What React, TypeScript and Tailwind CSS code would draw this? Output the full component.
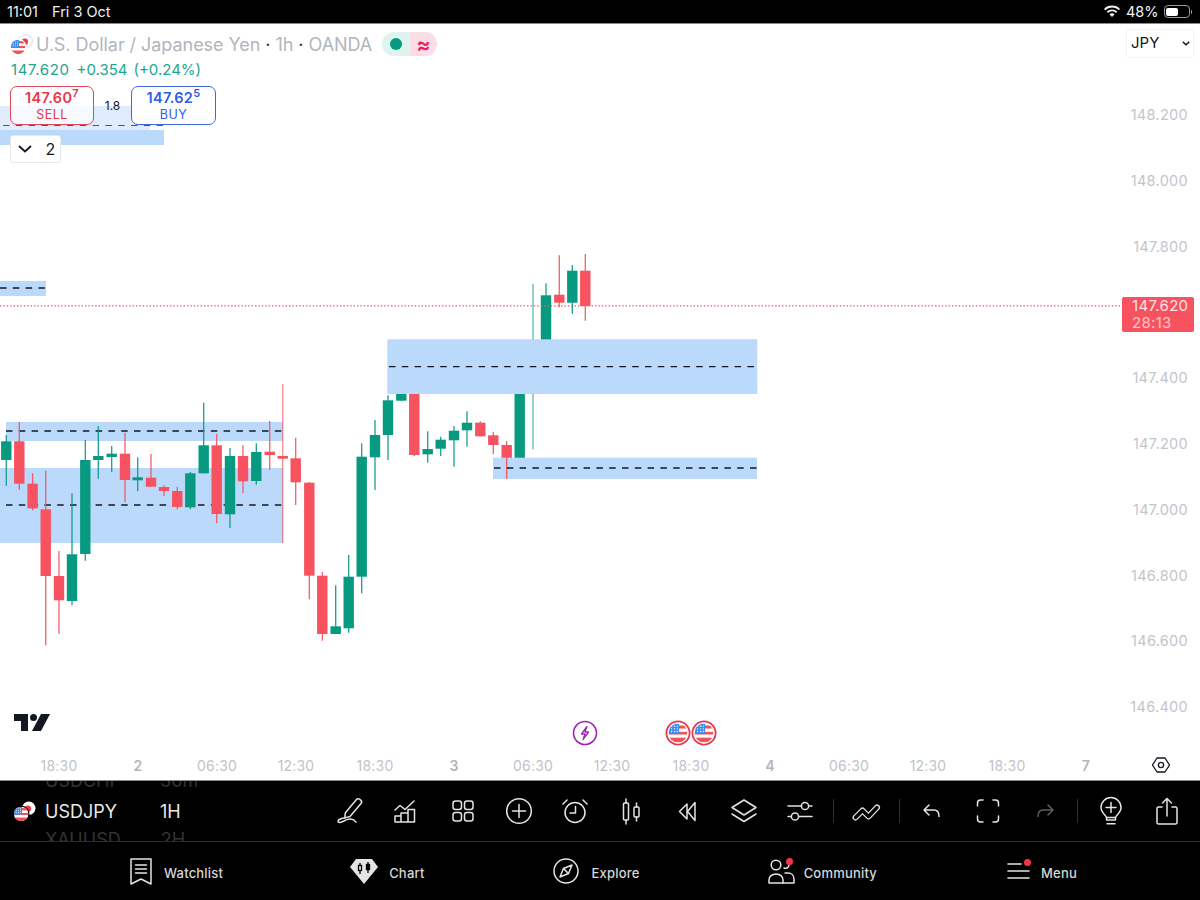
import type { ReactNode } from "react"

const GREEN = "#089981"
const RED = "#f7525f"

// color, x, wick top, body top, body bottom, wick bottom (page coords)
type Candle = [string, number, number, number, number, number, boolean?]

const candles: Candle[] = [
  ["g", 6.3, 435, 441.3, 460, 485.7],
  ["r", 19.3, 422, 441.3, 483.7, 489.7],
  ["r", 32.6, 473.3, 483.7, 508.3, 510.3],
  ["r", 45.7, 470.7, 509.3, 576, 645.3],
  ["r", 59, 551, 576, 600.3, 634],
  ["g", 72, 493.3, 554.3, 601, 605.3],
  ["g", 85.3, 440, 460, 554, 560.7],
  ["g", 98.3, 426, 456, 460, 478.7],
  ["g", 111.7, 446, 453.7, 457, 472],
  ["r", 125, 432.7, 453.7, 480, 502],
  ["g", 137.7, 457.3, 477.3, 480.3, 491.3],
  ["r", 151, 454, 477.7, 486.7, 486.7],
  ["r", 164, 485.3, 487, 491, 496],
  ["r", 177.3, 486.7, 491, 507, 509.3],
  ["g", 190.3, 472, 473.3, 507.3, 509.3],
  ["g", 203.7, 402.7, 445.3, 473.3, 473.3],
  ["r", 216.7, 434, 445.3, 514, 523.3],
  ["g", 230, 448, 456, 514.3, 528],
  ["r", 243, 445.3, 456, 481.3, 493.3],
  ["g", 256.3, 443.3, 452, 481, 484.7],
  ["r", 269.7, 421, 451.7, 455, 469.7],
  ["r", 282.7, 384, 456, 458.7, 543.3, true],
  ["r", 295.7, 437.7, 458.3, 482.3, 505],
  ["r", 309.3, 482, 482.7, 575.7, 599.3],
  ["r", 322.3, 572, 575.7, 634, 640.7],
  ["g", 335.7, 585.3, 626.3, 634, 634],
  ["g", 348.7, 555, 576.7, 628.3, 632.7],
  ["g", 361.7, 443.3, 456.7, 576.7, 593.3],
  ["g", 375, 420, 435, 457.3, 490],
  ["g", 388, 395.3, 400.3, 435, 460],
  ["g", 401.3, 390, 390, 400.7, 400.7],
  ["r", 414.3, 390, 390, 455, 456],
  ["g", 427.7, 431.3, 449, 454.3, 462.7],
  ["g", 440.7, 436.7, 439.7, 448.7, 456],
  ["g", 454, 426, 430.7, 440.3, 466.7],
  ["g", 467, 411.3, 422.7, 430.3, 446.7],
  ["r", 480.3, 421.3, 422.7, 436.3, 436.3],
  ["r", 493.3, 432, 435.3, 445, 454.3],
  ["r", 506.7, 441, 445, 458.3, 478.7],
  ["g", 519.7, 380, 380, 458.3, 458.3],
  ["g", 533, 284, 345, 345, 449.3, true],
  ["g", 546, 283.3, 295.3, 345, 345],
  ["r", 559.3, 255.3, 294.7, 302.7, 307.3],
  ["g", 572.3, 265, 270.7, 302.7, 313.7],
  ["r", 585.3, 254, 270.7, 306, 320.7],
]

function Candles() {
  return (
    <g>
      {candles.map(([c, x, wt, bt, bb, wb, pale], i) => {
        const color = c === "g" ? GREEN : RED
        return (
          <g key={i}>
            <line x1={x} x2={x} y1={wt} y2={wb} stroke={color} strokeWidth={pale ? 1.2 : 1.3} opacity={pale ? 0.72 : 0.92} />
            <rect x={x - 5.2} y={bt} width={10.4} height={bb - bt} fill={color} />
          </g>
        )
      })}
    </g>
  )
}

function Zone({ x, y, w, h, dash, dashX }: { x: number; y: number; w: number; h: number; dash: number; dashX?: number }) {
  return (
    <g>
      <rect x={x} y={y} width={w} height={h} fill="#bbd9fb" />
      <line x1={dashX ?? x} x2={x + w} y1={dash} y2={dash} stroke="#131722" strokeWidth={1.3} strokeDasharray="6.5 6.3" />
    </g>
  )
}

function UsFlag({ id, cx, cy, r }: { id: string; cx: number; cy: number; r: number }) {
  const top = cy - r
  const left = cx - r
  const d = r * 2
  return (
    <g>
      <clipPath id={id}>
        <circle cx={cx} cy={cy} r={r} />
      </clipPath>
      <g clipPath={"url(#" + id + ")"}>
        <rect x={left} y={top} width={d} height={d} fill="#fff" />
        <rect x={left} y={top + d * 0.1} width={d} height={d * 0.16} fill="#ef5350" />
        <rect x={left} y={top + d * 0.44} width={d} height={d * 0.14} fill="#ef5350" />
        <rect x={left} y={top + d * 0.75} width={d} height={d * 0.25} fill="#ef5350" />
        <rect x={left} y={top} width={d * 0.56} height={d * 0.56} fill="#3f8cf0" />
        {[0.16, 0.32, 0.46].map((a) =>
          [0.14, 0.28, 0.42].map((b) => (
            <circle key={a + "-" + b} cx={left + d * a} cy={top + d * b} r={d * 0.035} fill="#fff" />
          )),
        )}
      </g>
    </g>
  )
}

function PairFlag({ id, dark, className }: { id: string; dark?: boolean; className: string }) {
  return (
    <svg viewBox="0 0 24 22" className={className}>
      <circle cx="16.5" cy="7.5" r="7" fill="#fff" stroke={dark ? "#000" : "#d1d4dc"} strokeWidth={dark ? 0 : 0.8} />
      <circle cx="15.5" cy="8" r="3.4" fill="#ef3b4a" />
      <circle cx="8.5" cy="13.5" r="8.6" fill={dark ? "#000" : "#fff"} />
      <UsFlag id={id} cx={8.5} cy={13.5} r={7.6} />
    </svg>
  )
}

function EventFlag({ id }: { id: string }) {
  return (
    <svg viewBox="0 0 26 26" className="h-[26px] w-[26px]">
      <circle cx="13" cy="13" r="11.6" fill="#fff" stroke="#e53950" strokeWidth="1.8" />
      <UsFlag id={id} cx={13} cy={13} r={9.4} />
    </svg>
  )
}

function Tool({ children }: { children: ReactNode }) {
  return (
    <div className="flex w-[56.25px] shrink-0 items-center justify-center">
      <svg viewBox="0 0 30 30" width="30" height="30" fill="none" stroke="#e4e4e4" strokeWidth="1.5" strokeLinecap="round" strokeLinejoin="round">
        {children}
      </svg>
    </div>
  )
}

function Sep() {
  return (
    <div className="flex w-[9.75px] shrink-0 justify-center">
      <div className="h-[24px] w-px bg-[#2e2e2e]" />
    </div>
  )
}

function Toolbar() {
  return (
    <div className="flex items-center">
      <Tool>
        <path d="M21.5 3.5a2.2 2.2 0 0 1 3.2-.2l1.2 1.1a2.2 2.2 0 0 1 .1 3.1L15 20.5l-5.2 1.4.6-5.2z" />
        <path d="M9.8 22c-3 .2-6.8 1.5-6.8 3.3 0 1.7 2.5 1.5 4.5.4 2.6-1.5 5-3 8-2.6 2.5.3 4.3 1.5 5.5 3" />
      </Tool>
      <Tool>
        <path d="M4 14l5-4.5 5 4 9-8.5" />
        <path d="M4 26v-6h6v6zM10 26v-9h7v9zM17 26V13.5h6.5V26zM4 26h19.5" />
      </Tool>
      <Tool>
        <rect x="5" y="5" width="8.5" height="8.5" rx="2.5" />
        <rect x="16.5" y="5" width="8.5" height="8.5" rx="2.5" />
        <rect x="5" y="16.5" width="8.5" height="8.5" rx="2.5" />
        <rect x="16.5" y="16.5" width="8.5" height="8.5" rx="2.5" />
      </Tool>
      <Tool>
        <circle cx="15" cy="15" r="12.3" />
        <path d="M15 8.5v13M8.5 15h13" />
      </Tool>
      <Tool>
        <circle cx="15" cy="16.5" r="10" />
        <path d="M15.5 10.5v6.5H10M3 8l4-4M27 8l-4-4" />
      </Tool>
      <Tool>
        <path d="M10 3v4M10 24v4M20.5 7v4M20.5 21v4" />
        <rect x="7.5" y="7" width="5" height="17" rx="1" />
        <rect x="18" y="11" width="5" height="10" rx="1" />
      </Tool>
      <Tool>
        <path d="M14 8l-7.5 7.5L14 23zM22 6.5l-7.5 9 7.5 9z" />
      </Tool>
      <Tool>
        <path d="M15 4l12 7.5L15 19 3 11.5z" />
        <path d="M3 18l12 7.5L27 18" />
      </Tool>
      <Tool>
        <path d="M3 10h13.5M24 10h3M3 20.5h3M13.5 20.5H27" />
        <circle cx="20" cy="10" r="3.6" />
        <circle cx="10" cy="20.5" r="3.6" />
      </Tool>
      <Sep />
      <Tool>
        <path d="M4.5 21.5l7-7 6 6 8.5-9" strokeWidth="6" />
        <path d="M4.5 21.5l7-7 6 6 8.5-9" stroke="#000" strokeWidth="3.4" />
      </Tool>
      <Sep />
      <Tool>
        <path d="M12 9l-5 5 5 5M7 14h10c3.5 0 5 2.5 5 6.5" />
      </Tool>
      <Tool>
        <path d="M10 4H7.5A3 3 0 0 0 4.5 7v3M20 4h2.5a3 3 0 0 1 3 3v3M4.5 20v3a3 3 0 0 0 3 3H10M25.5 20v3a3 3 0 0 1-3 3H20" />
      </Tool>
      <Tool>
        <g stroke="#5f5f5f">
          <path d="M18 9l5 5-5 5M23 14H13c-3.5 0-5 2.5-5 6.5" />
        </g>
      </Tool>
      <Sep />
      <Tool>
        <path d="M10.5 24v-2.5c0-2-5.5-4.5-5.5-10a10 10 0 0 1 20 0c0 5.5-5.5 8-5.5 10V24zM11 27.8h8" />
        <path d="M15 6.5v10M10 11.5h10M10.5 21.5h9" />
      </Tool>
      <Tool>
        <path d="M10 11H6.5A1.5 1.5 0 0 0 5 12.5v14A1.5 1.5 0 0 0 6.5 28h17a1.5 1.5 0 0 0 1.5-1.5v-14a1.5 1.5 0 0 0-1.5-1.5H20" />
        <path d="M15 20V2.5M10.5 7L15 2.5 19.5 7" />
      </Tool>
    </div>
  )
}

function NavItem({ icon, label, className }: { icon: ReactNode; label: string; className: string }) {
  return (
    <div className={"relative flex items-center " + className}>
      {icon}
      <span className="mt-[5px] text-[13px] font-medium tracking-[0.2px] text-[#d6d6d6]">{label}</span>
    </div>
  )
}

function Nav() {
  const stroke = { fill: "none", stroke: "#e4e4e4", strokeWidth: 1.5, strokeLinejoin: "round" as const, strokeLinecap: "round" as const }
  return (
    <div className="flex h-[58px] items-center pl-[130px]">
      <NavItem
        className="gap-[12px]"
        label="Watchlist"
        icon={
          <svg viewBox="0 0 22 27" width="22" height="27" {...stroke}>
            <path d="M1 1h20v25l-10-5-10 5z" />
            <path d="M5.5 7h11M5.5 11h11M5.5 15h11" />
          </svg>
        }
      />
      <NavItem
        className="ml-[127px] gap-[11px]"
        label="Chart"
        icon={
          <svg viewBox="0 0 28 26" width="28" height="26">
            <path d="M6 1h16l6 8-14 17L0 9z" fill="#e4e4e4" />
            <g stroke="#000" strokeWidth="1.3" fill="none">
              <path d="M10 5v11M18 4v11" />
              <rect x="8.5" y="7.5" width="3" height="5" fill="#e4e4e4" />
              <rect x="16.5" y="6.5" width="3" height="5" fill="#000" />
            </g>
          </svg>
        }
      />
      <NavItem
        className="ml-[128px] gap-[13px]"
        label="Explore"
        icon={
          <svg viewBox="0 0 26 26" width="26" height="26" {...stroke}>
            <circle cx="13" cy="13" r="12" />
            <path d="M19 7l-3.5 8.5L7 19l3.5-8.5z" />
            <path d="M10.5 10.5l5 5" />
          </svg>
        }
      />
      <NavItem
        className="ml-[128px] gap-[9px]"
        label="Community"
        icon={
          <>
            <svg viewBox="0 0 27 25" width="27" height="25" {...stroke}>
              <circle cx="8" cy="6" r="4.8" />
              <path d="M1 24v-3c0-3.5 3-6 7-6s7 2.5 7 6v3z" />
              <path d="M21 3v3a3.5 3.5 0 0 1-5 3M17 14h3c3.5 0 6 2.5 6 6v4H15" />
            </svg>
            <span className="absolute top-[-1px] left-[18px] h-[7px] w-[7px] rounded-full bg-[#f23645]" />
          </>
        }
      />
      <NavItem
        className="ml-[130px] gap-[11px]"
        label="Menu"
        icon={
          <>
            <svg viewBox="0 0 23 20" width="23" height="20" fill="none" stroke="#e4e4e4" strokeWidth="1.6" strokeLinecap="round">
              <path d="M1 3h13M1 10h21M1 17h21" />
            </svg>
            <span className="absolute top-0 left-[17px] h-[7px] w-[7px] rounded-full bg-[#f23645]" />
          </>
        }
      />
    </div>
  )
}

// the 147.600 slot sits under the live price tag, so it stays empty
const prices = ["148.200", "148.000", "147.800", "", "147.400", "147.200", "147.000", "146.800", "146.600", "146.400"]
const times = ["18:30", "2", "06:30", "12:30", "18:30", "3", "06:30", "12:30", "18:30", "4", "06:30", "12:30", "18:30", "7"]

export default function App() {
  return (
    <div className="flex h-[900px] w-[1200px] flex-col overflow-hidden bg-white font-['Inter','Liberation_Sans',sans-serif]">
      {/* status bar */}
      <div className="flex h-[24px] items-center justify-between border-b border-[#8a8a8a] bg-black pr-[8px] pl-[7px] text-[14.5px] text-[#f2f2f2]">
        <div className="flex gap-[14px]">
          <span>11:01</span>
          <span>Fri 3 Oct</span>
        </div>
        <div className="flex items-center gap-[5px]">
          <svg viewBox="0 0 18 13" width="18" height="13" fill="#f2f2f2">
            <path d="M9 2.5c2.6 0 5 1 6.8 2.7l1.2-1.3A11.6 11.6 0 0 0 9 .6 11.6 11.6 0 0 0 1 3.9l1.2 1.3A9.8 9.8 0 0 1 9 2.5z" />
            <path d="M9 6.3c1.6 0 3 .6 4.1 1.6l1.2-1.3A7.8 7.8 0 0 0 9 4.5a7.8 7.8 0 0 0-5.3 2.1l1.2 1.3A6 6 0 0 1 9 6.3z" />
            <path d="M9 8.2c-1 0-1.9.4-2.6 1L9 12l2.6-2.8A3.8 3.8 0 0 0 9 8.2z" />
          </svg>
          <span>48%</span>
          <div className="flex items-center gap-[1px]">
            <div className="h-[13px] w-[26px] rounded-[4px] border border-[#9a9a9a] p-[1.5px]">
              <div className="h-full w-[12px] rounded-[2px] bg-white" />
            </div>
            <div className="h-[4px] w-[1.5px] rounded-r bg-[#9a9a9a]" />
          </div>
        </div>
      </div>

      {/* chart */}
      <div className="relative flex-1">
        <svg viewBox="0 24 1200 728" className="absolute inset-0 h-full w-full">
          <rect x="0" y="106" width="150" height="24" fill="#e0ecfc" />
          <rect x="0" y="130" width="164" height="15" fill="#bbd9fb" />
          <line x1="3" x2="164" y1="125.5" y2="125.5" stroke="#131722" strokeWidth="1" strokeDasharray="6.5 6.3" opacity="0.7" />
          <Zone x={0} y={281} w={46} h={15} dash={288} />
          <Zone x={6} y={422} w={277} h={19} dash={431} />
          <Zone x={0} y={468} w={283} h={75} dash={505} dashX={6} />
          <Candles />
          <Zone x={387.3} y={339.3} w={370} h={54.7} dash={366.7} dashX={389} />
          <rect x="493" y="457.7" width="264" height="21.3" fill="#bbd9fb" />
          <line x1={506.7} x2={506.7} y1={458} y2={478.7} stroke={RED} strokeWidth="1.3" />
          <line x1="494" x2="757" y1="468" y2="468" stroke="#131722" strokeWidth="1.3" strokeDasharray="6.5 6.3" />
          <line x1="0" x2="1122" y1="305.8" y2="305.8" stroke={RED} strokeWidth="1.2" strokeDasharray="1.4 2" />
        </svg>

        {/* legend */}
        <div className="absolute top-0 left-0 pt-[8px] pl-[10px]">
          <div className="flex h-[24px] items-center">
            <PairFlag id="legend-us" className="mr-[3px] h-[21px] w-[23px]" />
            <span className="text-[18px] tracking-[-0.05px] text-[#b2b5be]">
              U.S. Dollar / Japanese Yen<span className="text-[#131722]"> · </span>1h<span className="text-[#131722]"> · </span>OANDA
            </span>
            <div className="ml-[10px] flex h-[24px] w-[55px]">
              <div className="flex flex-1 items-center justify-center rounded-l-full bg-[#dff3ef]">
                <span className="h-[12px] w-[12px] rounded-full bg-[#089981]" />
              </div>
              <div className="flex flex-1 items-center justify-center rounded-r-full bg-[#fbdde6] text-[21px] leading-none font-semibold text-[#e91e63]">≈</div>
            </div>
          </div>
          <div className="mt-[5px] flex pl-[1px] text-[15px] leading-[18px] text-[#22a68f]">
            <span className="tracking-[0.6px]">147.620</span>
            <span className="ml-[7px]">+0.354</span>
            <span className="ml-[6px]">(+0.24%)</span>
          </div>
          <div className="mt-[7px] flex items-center">
            <div className="flex h-[39px] w-[84px] flex-col items-center justify-center rounded-[7px] border border-[#e04757] bg-white/70 text-[#e8374a]">
              <span className="text-[14.5px] leading-[18px] font-semibold tracking-[0.3px]">
                147.60<sup className="text-[11px]">7</sup>
              </span>
              <span className="text-[12.5px] leading-[16px] tracking-[0.5px]">SELL</span>
            </div>
            <span className="w-[37px] text-center text-[12px] text-[#131722]">1.8</span>
            <div className="flex h-[39px] w-[85px] flex-col items-center justify-center rounded-[7px] border border-[#3f66e8] bg-white text-[#2f5ce8]">
              <span className="text-[14.5px] leading-[18px] font-semibold tracking-[0.3px]">
                147.62<sup className="text-[11px]">5</sup>
              </span>
              <span className="text-[12.5px] leading-[16px] tracking-[0.5px]">BUY</span>
            </div>
          </div>
          <div className="mt-[10px] flex h-[28px] w-[51px] items-center justify-center gap-[14px] rounded-[3px] border border-[#e6e8ee] bg-white pl-[2px] text-[16px] text-[#131722]">
            <svg viewBox="0 0 14 8" width="14" height="8" fill="none" stroke="#131722" strokeWidth="1.8">
              <path d="M1 1l6 5.5L13 1" />
            </svg>
            2
          </div>
        </div>

        {/* price axis */}
        <div className="absolute top-0 right-0 flex flex-col items-end pr-[12px]">
          <div className="mt-[5px] mr-[-6px] mb-[24px] flex h-[29px] w-[68px] items-center justify-between rounded-[4px] border border-[#f0f3fa] pr-[3px] pl-[4px] text-[15px] text-[#131722]">
            JPY
            <svg viewBox="0 0 10 6" width="8" height="5" fill="none" stroke="#131722" strokeWidth="1.8">
              <path d="M1 1l4 3.5L9 1" />
            </svg>
          </div>
          {prices.map((p, i) => (
            <div key={i} className="flex h-[65.8px] items-center text-[14.5px] tracking-[0.3px] text-[#c3c5cb]">
              {p}
            </div>
          ))}
        </div>

        <div className="absolute top-[273px] right-[6px] flex h-[35px] w-[72px] flex-col justify-center rounded-[2px] bg-[#f7525f] pl-[10px] text-[15px] leading-[16.5px] tracking-[0.3px] text-[#fde3e5]">
          <span>147.620</span>
          <span className="text-[#fdc5c9]">28:13</span>
        </div>

        {/* logo and events */}
        <svg viewBox="0 0 36 17" width="36" height="17" className="absolute top-[690px] left-[14px]" fill="#131722">
          <path d="M0 0h14v17H7V7H0z" />
          <circle cx="19.5" cy="3.5" r="3.5" />
          <path d="M27 0h9l-9 17h-9z" />
        </svg>
        <svg viewBox="0 0 26 26" width="26" height="26" className="absolute top-[696px] left-[572px]" fill="none">
          <circle cx="13" cy="13" r="11.5" stroke="#9c27b0" strokeWidth="1.6" />
          <path d="M15 6.5L9.5 14H13l-2 5.5 5.5-7.5H13z" stroke="#9c27b0" strokeWidth="1.3" strokeLinejoin="round" />
        </svg>
        <div className="absolute top-[696px] left-[665px] flex">
          <EventFlag id="ev-a" />
          <EventFlag id="ev-b" />
        </div>
      </div>

      {/* time axis */}
      <div className="flex h-[28px] shrink-0 items-center bg-white pb-[2px] pl-[19.5px] text-[14px] tracking-[0.2px] text-[#c0c3ca]">
        {times.map((t, i) => (
          <span key={i} className={t.length === 1 ? "w-[79px] text-center font-semibold text-[#b2b5be]" : "w-[79px] text-center"}>
            {t}
          </span>
        ))}
        <svg viewBox="0 0 18 18" width="18" height="18" className="ml-[26.5px]" fill="none" stroke="#131722" strokeWidth="1.3" strokeLinejoin="round">
          <path d="M5 2h8l4.5 7-4.5 7H5L.5 9z" />
          <circle cx="9" cy="9" r="2.6" />
        </svg>
      </div>

      {/* bottom bars */}
      <div className="shrink-0 bg-black">
        <div className="relative flex h-[61px] items-center overflow-hidden border-t border-[#8a8a8a]">
          <div className="absolute top-[-9px] left-[45px] flex gap-[40px] text-[18px] leading-[18px] text-[#333]">
            <span>USDCHF</span>
            <span>30m</span>
          </div>
          <div className="absolute bottom-[-8px] left-[45px] flex gap-[40px] text-[18px] leading-[18px] text-[#333]">
            <span>XAUUSD</span>
            <span>2H</span>
          </div>
          <div className="flex w-[321.875px] shrink-0 items-center pl-[13px] text-[18px] text-[#e8e8e8]">
            <PairFlag id="bar-us" dark className="mr-[9px] h-[21px] w-[23px]" />
            <span className="w-[115px]">USDJPY</span>
            <span>1H</span>
          </div>
          <Toolbar />
        </div>
        <div className="h-px bg-[#2c2c2c]" />
        <Nav />
      </div>
    </div>
  )
}
